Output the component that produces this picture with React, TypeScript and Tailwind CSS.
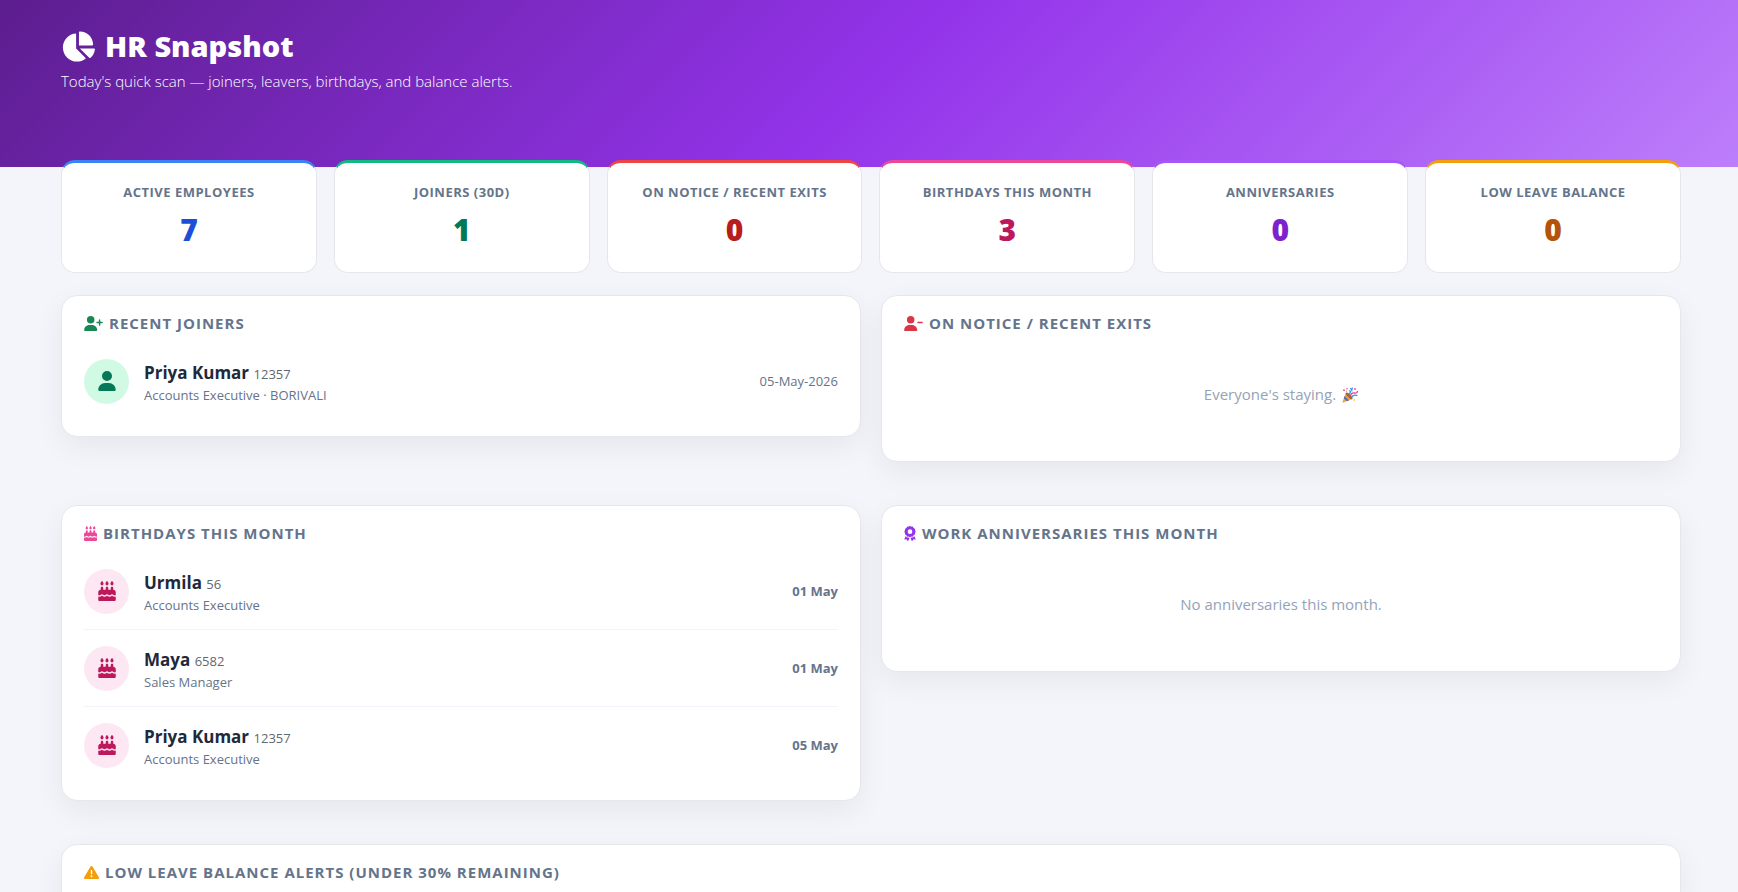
import type { ReactNode } from "react";
import type { IconType } from "react-icons";
import {
  FaAward,
  FaCakeCandles,
  FaChartPie,
  FaTriangleExclamation,
  FaUser,
  FaUserMinus,
  FaUserPlus,
} from "react-icons/fa6";

const stats = [
  { label: "Active Employees", value: 7, border: "border-t-[#3b82f6]", text: "text-[#1d4ed8]" },
  { label: "Joiners (30d)", value: 1, border: "border-t-[#10b981]", text: "text-[#047857]" },
  { label: "On Notice / Recent Exits", value: 0, border: "border-t-[#ef4444]", text: "text-[#b91c1c]" },
  { label: "Birthdays This Month", value: 3, border: "border-t-[#ec4899]", text: "text-[#be185d]" },
  { label: "Anniversaries", value: 0, border: "border-t-[#a855f7]", text: "text-[#7e22ce]" },
  { label: "Low Leave Balance", value: 0, border: "border-t-[#f59e0b]", text: "text-[#b45309]" },
];

const birthdays = [
  { name: "Urmila", code: "56", role: "Accounts Executive", date: "01 May" },
  { name: "Maya", code: "6582", role: "Sales Manager", date: "01 May" },
  { name: "Priya Kumar", code: "12357", role: "Accounts Executive", date: "05 May" },
];

function StatCard({ label, value, border, text }: (typeof stats)[number]) {
  return (
    <div
      className={`rounded-[14px] border border-t-[3px] border-[#e5e7eb] bg-white px-3 pt-[18px] pb-[23px] text-center ${border}`}
    >
      <div className="text-[13px] leading-[22px] font-bold tracking-[0.5px] text-[#64748b] uppercase">{label}</div>
      <div className={`mt-[7px] text-[30px] leading-[39px] font-extrabold ${text}`}>{value}</div>
    </div>
  );
}

type PanelProps = {
  title: string;
  icon: IconType;
  iconClass: string;
  children?: ReactNode;
};

function Panel({ title, icon: Icon, iconClass, children }: PanelProps) {
  return (
    <section className="rounded-2xl border border-[#e5e7eb] bg-white px-[22px] pt-[17px] pb-[17px] shadow-[0_10px_30px_rgba(0,0,0,0.06)]">
      <h2 className="mb-[10px] flex items-center gap-[6px] text-[15px] leading-5 font-bold tracking-[1px] text-[#64748b] uppercase">
        <Icon className={`h-[15px] shrink-0 ${iconClass}`} />
        {title}
      </h2>
      {children}
    </section>
  );
}

type PersonRowProps = {
  name: string;
  code: string;
  detail: string;
  date: string;
  icon: IconType;
  avatarClass: string;
  dateClass?: string;
};

function PersonRow({ name, code, detail, date, icon: Icon, avatarClass, dateClass = "" }: PersonRowProps) {
  return (
    <li className="flex items-center gap-[15px] border-b border-[#f1f5f9] py-[14px] last:border-b-0">
      <div className={`flex size-[45px] shrink-0 items-center justify-center rounded-full ${avatarClass}`}>
        <Icon className="h-5 w-[18px]" />
      </div>
      <div className="min-w-0 flex-1 pt-[2px]">
        <div className="text-[17px] leading-[27px] font-bold text-[#1e293b]">
          {name} <span className="text-[13px] leading-none font-normal text-[#5f6772]">{code}</span>
        </div>
        <div className="text-[13px] leading-[19px] text-[#64748b]">{detail}</div>
      </div>
      <div className={`pt-[2px] text-[13px] text-[#64748b] ${dateClass}`}>{date}</div>
    </li>
  );
}

function EmptyNote({ children }: { children: ReactNode }) {
  return (
    <p className="flex items-center justify-center pt-[39px] pb-[37px] text-[15px] leading-[25px] text-[#94a3b8]">
      {children}
    </p>
  );
}

function PartyPopper() {
  return (
    <svg viewBox="0 0 16 16" className="ml-[6px] size-4" role="img" aria-label="Party popper">
      <path d="M4 5.5 10.5 12 1.2 15.6Q.2 15.8.5 14.8Z" fill="#f5a623" />
      <path d="M2.6 9 7 13.4 4.8 14.2 1.8 11.2Z" fill="#4f6bc9" />
      <ellipse cx="7.2" cy="8.8" rx="1.6" ry="4.4" transform="rotate(-45 7.2 8.8)" fill="#a8653c" />
      <path d="M7 7.5Q9.5 5 7.5 3.2M9.5 10Q12 7.2 15.5 8.6" stroke="#2f9bf0" strokeWidth="1.4" fill="none" />
      <path d="M8.5 8.5Q9.5 5.5 12.5 6T15.5 4" stroke="#f23fa0" strokeWidth="1.3" fill="none" />
      <path d="M8.5 1 9.8 3.5 10.4.5" stroke="#2f9bf0" strokeWidth="1.2" fill="none" />
      <g fill="#f23fa0">
        <circle cx="2" cy="3.2" r=".9" />
        <circle cx="5" cy="1.8" r=".8" />
        <circle cx="13" cy="2" r=".9" />
      </g>
      <g fill="#f5a623">
        <circle cx="12.2" cy="13" r=".8" />
        <circle cx="4.5" cy="4.2" r=".6" />
      </g>
    </svg>
  );
}

export default function App() {
  return (
    <div className="h-screen overflow-hidden bg-[#f4f5fb] font-['Segoe_UI','Open_Sans','Noto_Sans',sans-serif]">
      {/* Hero */}
      <header className="bg-[linear-gradient(135deg,#581c87_-4%,#9333ea_50%,#c084fc_104%)] pt-7 pr-[57px] pb-[74px] pl-[61px] text-white">
        <h1 className="flex items-center gap-[10px] text-[29px] leading-9 font-extrabold">
          <FaChartPie className="h-[31px] w-[34px]" />
          HR Snapshot
        </h1>
        <p className="mt-[5px] text-[15px] leading-6 font-light text-white">
          Today's quick scan — joiners, leavers, birthdays, and balance alerts.
        </p>
      </header>

      <main className="relative -mt-[7px] pr-[57px] pl-[61px]">
        {/* Stat cards */}
        <div className="grid grid-cols-6 gap-[17px]">
          {stats.map((stat) => (
            <StatCard key={stat.label} {...stat} />
          ))}
        </div>

        {/* Panels */}
        <div className="mt-[22px] grid grid-cols-2 items-start gap-x-5 gap-y-[43px]">
          <Panel title="Recent Joiners" icon={FaUserPlus} iconClass="w-[19px] text-[#198754]">
            <ul>
              <PersonRow
                name="Priya Kumar"
                code="12357"
                detail="Accounts Executive · BORIVALI"
                date="05-May-2026"
                icon={FaUser}
                avatarClass="bg-[#d1fae5] text-[#047857]"
              />
            </ul>
          </Panel>

          <Panel title="On Notice / Recent Exits" icon={FaUserMinus} iconClass="w-[19px] text-[#dc3545]">
            <EmptyNote>
              Everyone's staying. <PartyPopper />
            </EmptyNote>
          </Panel>

          <Panel title="Birthdays This Month" icon={FaCakeCandles} iconClass="w-[13px] text-[#ec4899]">
            <ul>
              {birthdays.map((person) => (
                <PersonRow
                  key={person.code}
                  name={person.name}
                  code={person.code}
                  detail={person.role}
                  date={person.date}
                  icon={FaCakeCandles}
                  avatarClass="bg-[#fce7f3] text-[#be185d]"
                  dateClass="font-bold"
                />
              ))}
            </ul>
          </Panel>

          <Panel title="Work Anniversaries This Month" icon={FaAward} iconClass="w-[12px] text-[#9333ea]">
            <EmptyNote>No anniversaries this month.</EmptyNote>
          </Panel>

          <div className="col-span-2">
            <Panel
              title="Low Leave Balance Alerts (Under 30% Remaining)"
              icon={FaTriangleExclamation}
              iconClass="w-[15px] text-[#f59e0b]"
            />
          </div>
        </div>
      </main>
    </div>
  );
}
